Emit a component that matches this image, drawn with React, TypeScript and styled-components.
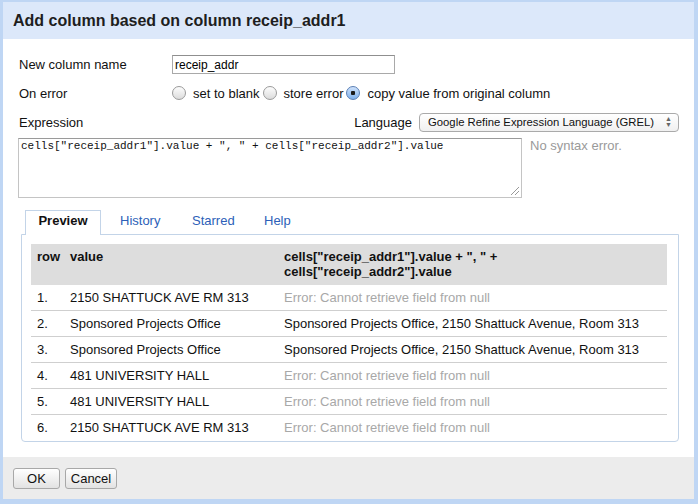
import React from "react";
import styled, { createGlobalStyle } from "styled-components";

const Global = createGlobalStyle`
  html, body { margin: 0; padding: 0; background: #bfd6f4; }
  * { box-sizing: border-box; }
`;

const Frame = styled.div`
  width: 698px;
  height: 504px;
  background: #bfd6f4;
  padding: 2px 4px 5px 3px;
  display: flex;
  font-family: "Liberation Sans", Arial, sans-serif;
  color: #111;
`;

const Dialog = styled.div`
  flex: 1;
  display: flex;
  flex-direction: column;
  background: #fff;
`;

const Header = styled.div`
  height: 37px;
  background: #dce8fa;
  display: flex;
  align-items: center;
  padding-left: 10px;
  font-size: 16px;
  font-weight: bold;
  color: #1e1e1e;
`;

const Body = styled.div`
  flex: 1;
  padding: 15px 15px 0 15px;
  display: flex;
  flex-direction: column;
`;

const FormRow = styled.div<{ $h: number }>`
  display: flex;
  align-items: center;
  height: ${(p) => p.$h}px;
  font-size: 13px;
`;

const Label = styled.div`
  width: 154px;
  padding-left: 1px;
  flex: none;
`;

const TextInput = styled.div`
  width: 223px;
  height: 19px;
  border: 1px solid #a9a9a9;
  border-top-color: #8f8f8f;
  font-size: 12px;
  padding: 2px 0 0 2px;
  color: #000;
`;

const RadioGroup = styled.div`
  display: flex;
  align-items: center;
`;

const RadioItem = styled.label`
  display: flex;
  align-items: center;
  margin-right: 3px;
`;

const RadioDot = styled.span<{ $on?: boolean }>`
  width: 14px;
  height: 14px;
  border-radius: 50%;
  border: 1px solid ${(p) => (p.$on ? "#5a7fb5" : "#9a9a9a")};
  background: ${(p) =>
    p.$on
      ? "radial-gradient(circle at 50% 50%, #1a1a1a 0 2px, transparent 2.5px), linear-gradient(#cfe2fb, #7fb1ec)"
      : "linear-gradient(#fdfdfd, #dcdcdc)"};
  margin-right: 7px;
  flex: none;
`;

const ExprHead = styled.div`
  display: flex;
  align-items: center;
  height: 20px;
  font-size: 13px;
`;

const Spacer = styled.div`
  flex: 1;
`;

const LangLabel = styled.span`
  margin-right: 7px;
`;

const Select = styled.div`
  width: 260px;
  height: 19px;
  border: 1px solid #aaa;
  border-radius: 4px;
  background: linear-gradient(#ffffff, #f0f0f0);
  font-size: 11.3px;
  display: flex;
  align-items: center;
  padding: 0 6px 0 8px;
  color: #111;
`;

const SelArrow = styled.span`
  margin-left: auto;
  font-size: 7px;
  color: #666;
  line-height: 0.8;
  display: flex;
  flex-direction: column;
  align-items: center;
`;

const ExprRow = styled.div`
  display: flex;
  margin-top: 6px;
`;

const Textarea = styled.div`
  width: 504px;
  height: 60px;
  border: 1px solid #c4c4c4;
  border-top-color: #9a9a9a;
  font-family: "Liberation Mono", "Courier New", monospace;
  font-size: 11px;
  padding: 1px 2px;
  position: relative;
  white-space: pre;
`;

const Grip = styled.span`
  position: absolute;
  right: 2px;
  bottom: 2px;
  width: 8px;
  height: 8px;
  background: linear-gradient(135deg, transparent 0 45%, #999 45% 52%, transparent 52% 70%, #999 70% 77%, transparent 77%);
`;

const Status = styled.div`
  margin-left: 8px;
  margin-top: 0px;
  font-size: 13px;
  color: #9a9a9a;
`;

const Tabs = styled.div`
  display: flex;
  margin-top: 12px;
  margin-left: 7px;
  position: relative;
  z-index: 1;
  height: 25px;
`;

const Tab = styled.div<{ $active?: boolean }>`
  font-size: 13px;
  height: 25px;
  padding-top: 2px;
  width: ${(p) => (p.$active ? 76 : 72)}px;
  text-align: ${(p) => (p.$active ? "center" : "left")};
  padding-left: ${(p) => (p.$active ? 0 : 18)}px;
  font-weight: ${(p) => (p.$active ? "bold" : "normal")};
  color: ${(p) => (p.$active ? "#111" : "#2d5fb8")};
  background: ${(p) => (p.$active ? "#fff" : "transparent")};
  border: ${(p) => (p.$active ? "1px solid #c3d4e8" : "1px solid transparent")};
  border-bottom: none;
`;

const Panel = styled.div`
  margin-left: 3px;
  width: 658px;
  height: 208px;
  margin-top: -1px;
  border: 1px solid #c3d4e8;
  border-radius: 0 0 4px 4px;
  padding: 9px 11px 0 9px;
`;

const Table = styled.table`
  width: 100%;
  border-collapse: collapse;
  font-size: 13px;
`;

const Th = styled.th<{ $w?: number }>`
  background: #dddddd;
  text-align: left;
  vertical-align: top;
  font-weight: bold;
  padding: 5px 2px 6px 6px;
  line-height: 15px;
  height: 41px;
  width: ${(p) => (p.$w ? `${p.$w}px` : "auto")};
`;

const Tr = styled.tr`
  & + & td {
    border-top: 1px solid #cfcfcf;
  }
`;

const Td = styled.td<{ $err?: boolean }>`
  padding: 0 2px 0 6px;
  height: 25px;
  line-height: 25px;
  color: ${(p) => (p.$err ? "#a8a8a8" : "#111")};
  white-space: nowrap;
`;

const Footer = styled.div`
  height: 42px;
  background: #ececec;
  display: flex;
  align-items: flex-start;
  padding: 11px 0 0 10px;
  gap: 5px;
`;

const Button = styled.button<{ $w: number }>`
  width: ${(p) => p.$w}px;
  height: 21px;
  border: 1px solid #a8a8a8;
  border-radius: 3px;
  background: linear-gradient(#ffffff, #e2e2e2);
  font-family: "Liberation Sans", Arial, sans-serif;
  font-size: 13px;
  color: #111;
  padding: 0;
`;

const rows: [string, string, string, boolean][] = [
  ["1.", "2150 SHATTUCK AVE RM 313", "Error: Cannot retrieve field from null", true],
  ["2.", "Sponsored Projects Office", "Sponsored Projects Office, 2150 Shattuck Avenue, Room 313", false],
  ["3.", "Sponsored Projects Office", "Sponsored Projects Office, 2150 Shattuck Avenue, Room 313", false],
  ["4.", "481 UNIVERSITY HALL", "Error: Cannot retrieve field from null", true],
  ["5.", "481 UNIVERSITY HALL", "Error: Cannot retrieve field from null", true],
  ["6.", "2150 SHATTUCK AVE RM 313", "Error: Cannot retrieve field from null", true],
];

export default function App() {
  return (
    <>
      <Global />
      <Frame>
        <Dialog>
          <Header>Add column based on column receip_addr1</Header>
          <Body>
            <FormRow $h={20}>
              <Label>New column name</Label>
              <TextInput>receip_addr</TextInput>
            </FormRow>
            <FormRow $h={38}>
              <Label>On error</Label>
              <RadioGroup>
                <RadioItem>
                  <RadioDot />
                  set to blank
                </RadioItem>
                <RadioItem>
                  <RadioDot />
                  store error
                </RadioItem>
                <RadioItem>
                  <RadioDot $on />
                  copy value from original column
                </RadioItem>
              </RadioGroup>
            </FormRow>
            <ExprHead>
              <Label>Expression</Label>
              <Spacer />
              <LangLabel>Language</LangLabel>
              <Select>
                Google Refine Expression Language (GREL)
                <SelArrow>
                  <span>▲</span>
                  <span>▼</span>
                </SelArrow>
              </Select>
            </ExprHead>
            <ExprRow>
              <Textarea>
                {'cells["receip_addr1"].value + ", " + cells["receip_addr2"].value'}
                <Grip />
              </Textarea>
              <Status>No syntax error.</Status>
            </ExprRow>
            <Tabs>
              <Tab $active>Preview</Tab>
              <Tab>History</Tab>
              <Tab>Starred</Tab>
              <Tab>Help</Tab>
            </Tabs>
            <Panel>
              <Table>
                <thead>
                  <tr>
                    <Th $w={33}>row</Th>
                    <Th $w={214}>value</Th>
                    <Th>
                      cells["receip_addr1"].value + ", " +
                      <br />
                      cells["receip_addr2"].value
                    </Th>
                  </tr>
                </thead>
                <tbody>
                  {rows.map(([n, v, r, err]) => (
                    <Tr key={n}>
                      <Td>{n}</Td>
                      <Td>{v}</Td>
                      <Td $err={err}>{r}</Td>
                    </Tr>
                  ))}
                </tbody>
              </Table>
            </Panel>
          </Body>
          <Footer>
            <Button $w={47}>OK</Button>
            <Button $w={52}>Cancel</Button>
          </Footer>
        </Dialog>
      </Frame>
    </>
  );
}
